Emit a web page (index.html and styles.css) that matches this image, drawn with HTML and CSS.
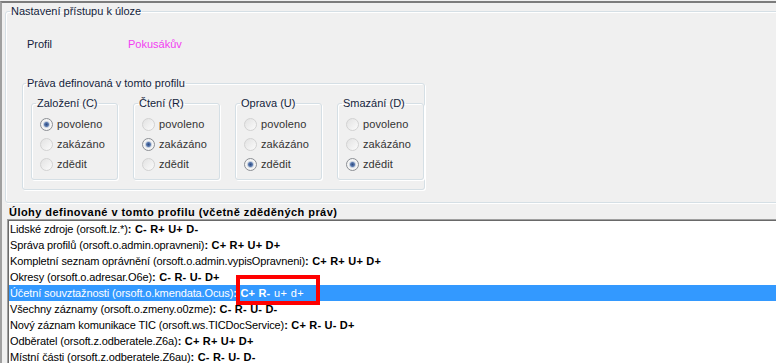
FILE: index.html
```html
<!DOCTYPE html>
<html lang="cs">
<head>
    <meta charset="UTF-8">
    <title>Nastavení přístupu k úloze</title>
    <link rel="stylesheet" href="styles.css">
</head>
<body>
    <div class="window">

        <!-- Access settings group -->
        <fieldset class="group outer">
            <legend>Nastavení přístupu k úloze</legend>
            <div class="outer-body">
                <div class="profile-row">
                    <span class="profile-label">Profil</span>
                    <span class="profile-name">Pokusákův</span>
                </div>

                <fieldset class="group rights">
                    <legend>Práva definovaná v tomto profilu</legend>
                    <div class="rights-body">
                        <fieldset class="group right">
                            <legend>Založení (C)</legend>
                            <label class="option"><input type="radio" name="c" checked> povoleno</label>
                            <label class="option"><input type="radio" name="c"> zakázáno</label>
                            <label class="option"><input type="radio" name="c"> zdědit</label>
                        </fieldset>
                        <fieldset class="group right">
                            <legend>Čtení (R)</legend>
                            <label class="option"><input type="radio" name="r"> povoleno</label>
                            <label class="option"><input type="radio" name="r" checked> zakázáno</label>
                            <label class="option"><input type="radio" name="r"> zdědit</label>
                        </fieldset>
                        <fieldset class="group right">
                            <legend>Oprava (U)</legend>
                            <label class="option"><input type="radio" name="u"> povoleno</label>
                            <label class="option"><input type="radio" name="u"> zakázáno</label>
                            <label class="option"><input type="radio" name="u" checked> zdědit</label>
                        </fieldset>
                        <fieldset class="group right">
                            <legend>Smazání (D)</legend>
                            <label class="option"><input type="radio" name="d"> povoleno</label>
                            <label class="option"><input type="radio" name="d"> zakázáno</label>
                            <label class="option"><input type="radio" name="d" checked> zdědit</label>
                        </fieldset>
                    </div>
                </fieldset>
            </div>
        </fieldset>

        <!-- Task list -->
        <div class="list-title">Úlohy definované v tomto profilu (včetně zděděných práv)</div>
        <ul class="task-list">
            <li>Lidské zdroje (orsoft.lz.*)<b>: C- R+ U+ D-</b></li>
            <li>Správa profilů (orsoft.o.admin.opravneni)<b>: C+ R+ U+ D+</b></li>
            <li>Kompletní seznam oprávnění (orsoft.o.admin.vypisOpravneni)<b>: C+ R+ U+ D+</b></li>
            <li>Okresy (orsoft.o.adresar.O6e)<b>: C- R- U- D+</b></li>
            <li class="selected">Účetní souvztažnosti (orsoft.o.kmendata.Ocus)<b>: </b><span class="marked"><b>C+ R-</b> u+ d+</span></li>
            <li>Všechny záznamy (orsoft.o.zmeny.o0zme)<b>: C- R- U- D-</b></li>
            <li>Nový záznam komunikace TIC (orsoft.ws.TICDocService)<b>: C+ R- U- D+</b></li>
            <li>Odběratel (orsoft.z.odberatele.Z6a)<b>: C+ R+ U+ D+</b></li>
            <li>Místní části (orsoft.z.odberatele.Z6au)<b>: C- R- U- D-</b></li>
        </ul>
    </div>
</body>
</html>
```

FILE: styles.css
```css
html, body {
    margin: 0;
    height: 100%;
    overflow: hidden;
}

body {
    font-family: 'Liberation Sans', Arial, sans-serif;
    font-size: 11px;
    background-color: #f0f0f0;
    color: #000;
}

.window {
    margin-top: 1px;
    height: 100%;
    border-top: 2px solid #7c7c7c;
    border-left: 2px solid #a0a0a0;
}

/* group boxes */
.group {
    margin: 0;
    padding: 0;
    border: 1px solid #d5dfe5;
    border-radius: 3px;
    box-shadow: inset 1px 1px 0 #fff, 1px 1px 0 #fff;
    min-width: 0;
}

.group legend {
    margin-left: 3px;
    padding: 0 1px;
    line-height: 13px;
    color: #141e3c;
}

.outer {
    margin: 2px 0 0 3px;
    width: 800px;
}

.outer > legend {
    margin-left: 4px;
}

.outer-body {
    padding: 20px 0 12px 16px;
}

.profile-row {
    display: flex;
    line-height: 13px;
    padding-left: 5px;
}

.profile-label {
    width: 101px;
    color: #141e3c;
}

.profile-name {
    color: #f23ef2;
}

.rights {
    margin-top: 26px;
    width: 401px;
}

.rights-body {
    display: flex;
    gap: 15px;
    padding: 7px 0 9px 8px;
}

.right {
    width: 83px;
    padding: 4px 0 5px 8px;
}

.right legend {
    margin-left: -4px;
}

.option {
    display: flex;
    align-items: center;
    gap: 4px;
    height: 20px;
    color: #333;
    letter-spacing: 0.1px;
}

.option input {
    appearance: none;
    margin: 0;
    width: 13px;
    height: 13px;
    border-radius: 50%;
    border: 1px solid #d2d2d2;
    background: linear-gradient(135deg, #e2e2e2, #fbfbfb);
}

.option input:checked {
    border-color: #8c8f94;
    background: radial-gradient(circle, #2c4a7e 0, #5b7ab0 2px, #c9d2de 3px, #f4f4f4 4px);
}

/* task list */
.list-title {
    margin-left: 7px;
    margin-top: 2px;
    line-height: 14px;
    font-weight: bold;
    letter-spacing: 0.45px;
    color: #000;
}

.task-list {
    list-style: none;
    margin: 0 0 0 5px;
    padding: 1px 0 0 1px;
    background-color: #fff;
    border-top: 1px solid #a0a0a0;
    border-left: 1px solid #a0a0a0;
    box-shadow: inset 1px 1px 0 #696969;
    height: 300px;
}

.task-list li {
    height: 16px;
    line-height: 16px;
    padding-left: 1px;
    white-space: nowrap;
    letter-spacing: -0.12px;
}

.task-list b {
    letter-spacing: 0.2px;
}

.task-list .selected {
    background-color: #3399ff;
    color: #fff;
}

.marked {
    position: relative;
    letter-spacing: 0.4px;
}

.marked::after {
    content: "";
    position: absolute;
    left: -4px;
    right: -16px;
    top: -12px;
    bottom: -6px;
    border: 4px solid #ff0000;
}
```
